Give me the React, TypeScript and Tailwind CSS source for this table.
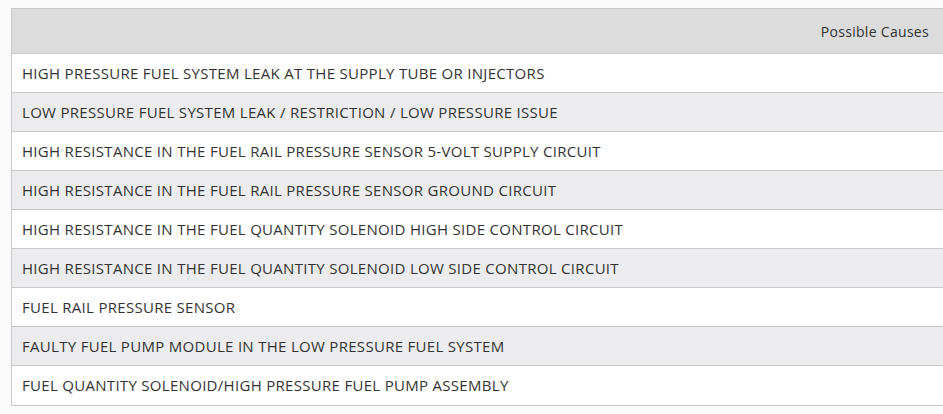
const causes = [
  'HIGH PRESSURE FUEL SYSTEM LEAK AT THE SUPPLY TUBE OR INJECTORS',
  'LOW PRESSURE FUEL SYSTEM LEAK / RESTRICTION / LOW PRESSURE ISSUE',
  'HIGH RESISTANCE IN THE FUEL RAIL PRESSURE SENSOR 5-VOLT SUPPLY CIRCUIT',
  'HIGH RESISTANCE IN THE FUEL RAIL PRESSURE SENSOR GROUND CIRCUIT',
  'HIGH RESISTANCE IN THE FUEL QUANTITY SOLENOID HIGH SIDE CONTROL CIRCUIT',
  'HIGH RESISTANCE IN THE FUEL QUANTITY SOLENOID LOW SIDE CONTROL CIRCUIT',
  'FUEL RAIL PRESSURE SENSOR',
  'FAULTY FUEL PUMP MODULE IN THE LOW PRESSURE FUEL SYSTEM',
  'FUEL QUANTITY SOLENOID/HIGH PRESSURE FUEL PUMP ASSEMBLY',
];

export default function App() {
  return (
    <div
      className="w-[943px] h-[414px] overflow-hidden bg-[#fbfbfb] pt-2 pl-[11px] text-[#333333]"
      style={{ fontFamily: '"Open Sans", "Liberation Sans", sans-serif' }}
    >
      <div className="w-[940px] border-t border-l border-b border-[#c8c8c8]">
        <div className="h-[45px] flex items-center justify-end pr-[22px] bg-[#dcdcdc] border-b border-[#c8c8c8] text-[14px] tracking-[0.3px]">
          Possible Causes
        </div>
        {causes.map((c, i) => (
          <div
            key={c}
            className={
              'h-[39px] flex items-center pl-[10px] text-[15px] tracking-[0.3px] ' +
              (i < causes.length - 1 ? 'border-b border-[#c8c8c8] ' : '') +
              (i % 2 === 1 ? 'bg-[#ececee]' : 'bg-white')
            }
          >
            {c}
          </div>
        ))}
      </div>
    </div>
  );
}
